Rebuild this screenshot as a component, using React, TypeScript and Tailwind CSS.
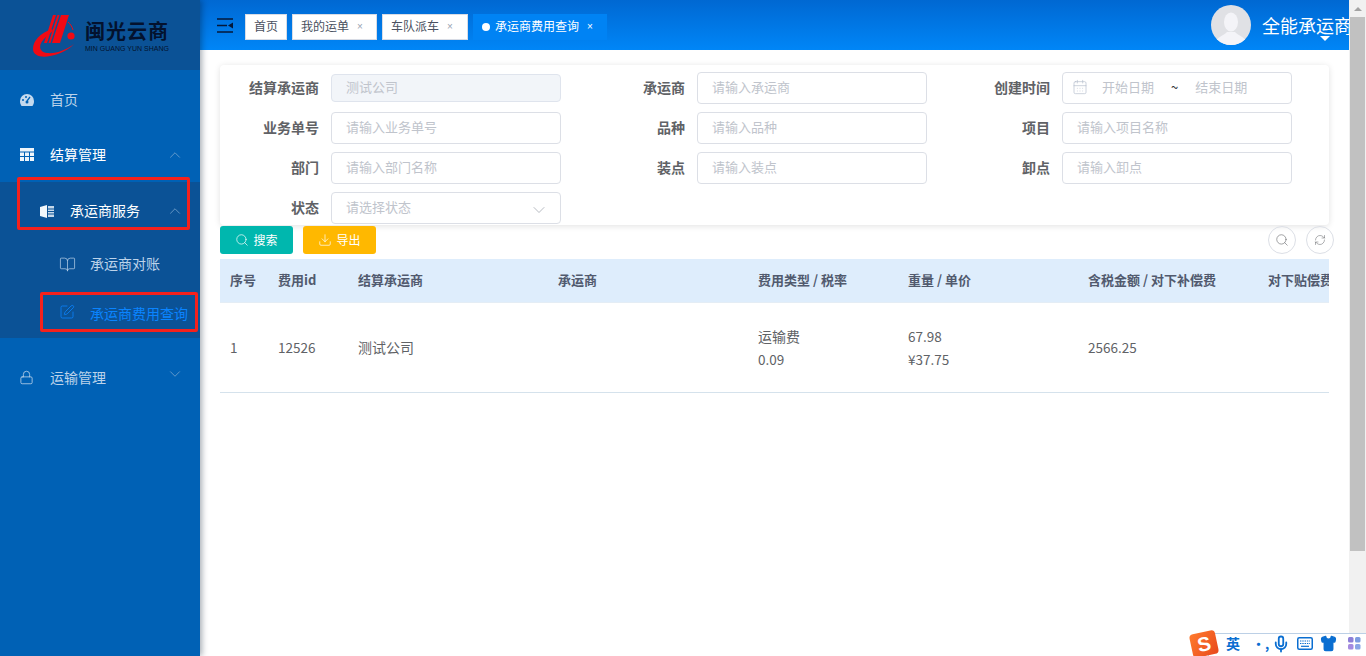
import { BookOpen, CalendarDays, ChevronDown, ChevronUp, Download, Lock, Mic, RefreshCw, Search, Shirt, SquarePen } from 'lucide-react'

const fontStack = 'font-["Noto_Sans_CJK_SC","Liberation_Sans",sans-serif]'

const formRows = [
  [
    { label: '结算承运商', placeholder: '测试公司', disabled: true },
    { label: '承运商', placeholder: '请输入承运商' },
    { label: '创建时间', range: true },
  ],
  [
    { label: '业务单号', placeholder: '请输入业务单号' },
    { label: '品种', placeholder: '请输入品种' },
    { label: '项目', placeholder: '请输入项目名称' },
  ],
  [
    { label: '部门', placeholder: '请输入部门名称' },
    { label: '装点', placeholder: '请输入装点' },
    { label: '卸点', placeholder: '请输入卸点' },
  ],
]

const columns = [
  { title: '序号', w: 'w-[48px]' },
  { title: '费用id', w: 'w-[80px]' },
  { title: '结算承运商', w: 'w-[200px]' },
  { title: '承运商', w: 'w-[200px]' },
  { title: '费用类型 / 税率', w: 'w-[150px]' },
  { title: '重量 / 单价', w: 'w-[180px]' },
  { title: '含税金额 / 对下补偿费', w: 'w-[180px]' },
  { title: '对下贴偿费', w: 'w-[120px]' },
]

function Logo() {
  return (
    <div className="flex h-[70px] items-center bg-[#0b5296] pl-[32px]">
      <svg width="44" height="44" viewBox="0 0 44 44" className="shrink-0">
        <path d="M21 2 L24 2 L15 30 L12 30 Z M25.500 2 L27.500 2 L18.500 30 L16.500 30 Z M29 2 L37 2 L28 30 L20 30 Z" fill="#f00a14" />
        <path d="M20 16 C8 20 1 28 1 36 C1 43 10 45 18 43 C28 41 36 37 42 31 C34 37 24 41 15 40 C7 39 6 32 12 26 C15 23 18 20 21 18 Z" fill="#f00a14" />
        <path d="M36 9 C38 11 40 13 41 17" stroke="#f00a14" strokeWidth="1" fill="none" />
        <circle cx="39" cy="23" r="3.600" fill="#f00a14" />
      </svg>
      <div className="ml-[9px] flex flex-col">
        <span className="text-[20px] leading-[26px] font-bold tracking-[1px] whitespace-nowrap text-[#03122e]">闽光云商</span>
        <span className='font-["Liberation_Sans",sans-serif] text-[7px] leading-[9px] whitespace-nowrap text-[#03122e]'>MIN GUANG YUN SHANG</span>
      </div>
    </div>
  )
}

function Sidebar() {
  return (
    <aside className="relative z-10 flex h-full w-[200px] shrink-0 flex-col bg-[#0061b5] shadow-[2px_0_6px_rgba(0,21,41,0.35)]">
      <Logo />

      <div className="flex h-[60px] items-center pl-[20px] text-[14px] text-[#bcd3ea]">
        <svg width="14" height="12" viewBox="0 0 14 12" className="shrink-0">
          <path d="M7 0 A7 7 0 0 0 0 7 C0 9 .5 10.500 1.500 12 L12.500 12 C13.500 10.500 14 9 14 7 A7 7 0 0 0 7 0 Z" fill="#c4d9ee" />
          <path d="M7 7 L10 3" stroke="#0061b5" strokeWidth="1.300" />
          <circle cx="3" cy="6" r="1" fill="#0061b5" />
          <circle cx="6" cy="3" r="1" fill="#0061b5" />
          <circle cx="7" cy="8" r="1.500" fill="#0061b5" />
        </svg>
        <span className="mb-[2px] ml-[16px]">首页</span>
      </div>

      <div className="flex h-[52px] items-center pr-[16px] pb-[3px] pl-[20px] text-[14px] text-white">
        <svg width="14" height="13" viewBox="0 0 14 13" className="shrink-0">
          <path d="M0 0 H14 V13 H0 Z" fill="#eef5fb" />
          <path d="M0 4 H14 M4.500 4 V13 M9.500 4 V13 M0 8.500 H14" stroke="#0061b5" strokeWidth="1" />
        </svg>
        <span className="ml-[16px]">结算管理</span>
        <ChevronUp size={18} strokeWidth={1} className="ml-auto text-[#7fa9d2]" />
      </div>

      <div className="flex h-[156px] flex-col bg-[#0b5296]">
        <div className="flex h-[58px] items-center pr-[16px] pl-[40px] text-[14px] text-white">
          <svg width="14" height="13" viewBox="0 0 14 13" className="shrink-0">
            <path d="M0 2 L7 0 V13 L0 11 Z" fill="#f2f7fb" />
            <path d="M8 1 H14 V12 H8 Z" fill="#c6d8ea" />
            <path d="M8 4 H14 M8 6.500 H14 M8 9 H14" stroke="#0b5296" strokeWidth="1" />
          </svg>
          <span className="mb-[2px] ml-[16px]">承运商服务</span>
          <ChevronUp size={18} strokeWidth={1} className="ml-auto text-[#7fa9d2]" />
        </div>
        <div className="flex h-[49px] items-center pl-[59px] text-[14px] text-[#bcd3ea]">
          <BookOpen size={17} strokeWidth={1} className="shrink-0" />
          <span className="mb-[2px] ml-[14px]">承运商对账</span>
        </div>
        <div className="flex h-[49px] items-center pl-[59px] text-[14px] text-[#0a84ff]">
          <SquarePen size={16} strokeWidth={1.200} className="mb-[4px] shrink-0" />
          <span className="ml-[15px] whitespace-nowrap">承运商费用查询</span>
        </div>
      </div>

      <div className="mt-[12px] flex h-[54px] items-center pr-[16px] pl-[19px] text-[14px] text-[#bcd3ea]">
        <Lock size={15} strokeWidth={1.300} className="shrink-0" />
        <span className="ml-[16px]">运输管理</span>
        <ChevronDown size={18} strokeWidth={1} className="mb-[6px] ml-auto text-[#7fa9d2]" />
      </div>

      {/* red marks drawn over the menu */}
      <div className="absolute top-[177px] left-[17px] h-[53px] w-[173px] rounded-[2px] border-[3px] border-[#f5211c]" />
      <div className="absolute top-[292px] left-[40px] h-[40px] w-[158px] rounded-[2px] border-[3px] border-[#f5211c]" />
    </aside>
  )
}

function Tab({ label, w, close }: { label: string; w: string; close?: boolean }) {
  return (
    <div className={`flex h-[26px] ${w} items-center border border-[#d8dce5] bg-white pb-[2px] pl-[8px] text-[12px] whitespace-nowrap text-[#495060]`}>
      <span>{label}</span>
      {close && <span className='ml-[8px] font-["Liberation_Sans",sans-serif] text-[10px] text-[#9aa3b2]'>×</span>}
    </div>
  )
}

function ActiveTab({ label }: { label: string }) {
  return (
    <div className="flex h-[26px] w-[134px] items-center bg-[#0083f4] pl-[9px] text-[12px] whitespace-nowrap text-white">
      <span className="h-[8px] w-[8px] rounded-full bg-white" />
      <span className="mb-[2px] ml-[5px]">{label}</span>
      <span className='mb-[2px] ml-[8px] font-["Liberation_Sans",sans-serif] text-[10px]'>×</span>
    </div>
  )
}

function Header() {
  return (
    <header className="flex h-[50px] shrink-0 items-center overflow-hidden bg-gradient-to-b from-[#0068d2] to-[#0086f7] pl-[17px]">
      <svg width="16" height="15" viewBox="0 0 16 15" className="shrink-0">
        <path d="M0 1 H16 M0 7.500 H10 M0 14 H16" stroke="#04183a" strokeWidth="1.600" />
        <path d="M16 4.500 V10.500 L11 7.500 Z" fill="#04183a" />
      </svg>
      <div className="mt-[4px] ml-[12px] flex gap-[5px]">
        <Tab label="首页" w="w-[42px]" />
        <Tab label="我的运单" w="w-[85px]" close />
        <Tab label="车队派车" w="w-[86px]" close />
        <ActiveTab label="承运商费用查询" />
      </div>
      <div className="relative ml-[604px] flex shrink-0 items-center">
        <svg width="40" height="40" viewBox="0 0 40 40" className="shrink-0">
          <clipPath id="avatar"><circle cx="20" cy="20" r="20" /></clipPath>
          <g clipPath="url(#avatar)">
            <rect width="40" height="40" fill="#e0e1e5" />
            <ellipse cx="20" cy="17" rx="7" ry="9.500" fill="#f4f4f8" />
            <path d="M4 40 C5 31 13 31 16 27 H24 C27 31 35 31 36 40 Z" fill="#f4f4f8" />
          </g>
        </svg>
        <span className="ml-[11px] text-[18px] whitespace-nowrap text-white">全能承运商</span>
        <span className="absolute top-[31px] left-[109px] h-0 w-0 border-x-[5px] border-t-[5px] border-x-transparent border-t-white" />
      </div>
    </header>
  )
}

function Field({ placeholder, disabled, select }: { placeholder?: string; disabled?: boolean; select?: boolean }) {
  return (
    <div className={`flex w-[230px] shrink-0 items-center rounded-[4px] border pl-[15px] text-[13px] text-[#c0c4cc] ${disabled ? 'h-[28px] border-[#dfe4ed] bg-[#f2f5f9]' : 'h-[32px] border-[#dcdfe6] bg-white'}`}>
      <span className="mb-[2px] -ml-px">{placeholder}</span>
      {select && <ChevronDown size={20} strokeWidth={1} className="mt-[4px] mr-[11px] ml-auto text-[#a8adb6]" />}
    </div>
  )
}

function RangeField() {
  return (
    <div className="flex h-[32px] w-[230px] shrink-0 items-center rounded-[4px] border border-[#dcdfe6] bg-white pl-[9px] text-[13px] text-[#c0c4cc]">
      <CalendarDays size={16} strokeWidth={1} className="mb-[3px] shrink-0 text-[#b4bccc]" />
      <span className="mb-[2px] ml-[14px]">开始日期</span>
      <span className="mb-[2px] ml-[17px] text-[#303133]">~</span>
      <span className="mb-[2px] ml-[17px]">结束日期</span>
    </div>
  )
}

function FormItem({ label, w, children }: { label: string; w: string; children: React.ReactNode }) {
  return (
    <div className="flex items-center">
      <span className={`${w} mb-[2px] shrink-0 pr-[12px] text-right text-[14px] font-bold whitespace-nowrap text-[#606266]`}>{label}</span>
      {children}
    </div>
  )
}

const labelWidths = ['w-[111px]', 'w-[136px]', 'w-[135px]']

function SearchForm() {
  return (
    <div className="h-[160px] w-[1109px] rounded-[4px] bg-white pt-[7px] shadow-[0_1px_6px_rgba(0,0,0,0.12)]">
      <div className="flex flex-col gap-[8px]">
        {formRows.map((row, i) => (
          <div key={i} className="flex">
            {row.map((f, j) => (
              <FormItem key={f.label} label={f.label} w={labelWidths[j]}>
                {f.range ? <RangeField /> : <Field placeholder={f.placeholder} disabled={f.disabled} />}
              </FormItem>
            ))}
          </div>
        ))}
        <div className="flex">
          <FormItem label="状态" w="w-[111px]">
            <Field placeholder="请选择状态" select />
          </FormItem>
        </div>
      </div>
    </div>
  )
}

function Toolbar() {
  return (
    <div className="flex h-[29px] w-[1114px] items-center pt-px">
      <button className="flex h-[28px] w-[73px] items-center justify-center gap-[4px] rounded-[3px] bg-[#00b7ae] text-[12px] text-white">
        <Search size={14} strokeWidth={1.200} />
        搜索
      </button>
      <button className="ml-[10px] flex h-[28px] w-[73px] items-center justify-center gap-[4px] rounded-[3px] bg-[#ffb800] text-[12px] text-white">
        <Download size={14} strokeWidth={1.200} />
        导出
      </button>
      <button className="ml-auto flex h-[28px] w-[28px] items-center justify-center rounded-full border border-[#dcdfe6] text-[#606266]">
        <Search size={14} strokeWidth={1} />
      </button>
      <button className="ml-[10px] flex h-[28px] w-[28px] items-center justify-center rounded-full border border-[#dcdfe6] text-[#606266]">
        <RefreshCw size={12} strokeWidth={1} />
      </button>
    </div>
  )
}

function FeeTable() {
  return (
    <div className="mt-[5px] w-[1109px] overflow-hidden">
      <div className="flex h-[44px] w-max items-center border-b border-[#e4edf5] bg-[#deedfc] pb-[2px] text-[13px] font-bold text-[#515a6e]">
        {columns.map((c) => (
          <div key={c.title} className={`${c.w} shrink-0 pl-[10px] whitespace-nowrap`}>{c.title}</div>
        ))}
      </div>
      <div className="flex h-[90px] w-max items-center border-b border-[#d5e2ec] text-[14px] text-[#606266]">
        <div className="w-[48px] shrink-0 pl-[10px] text-[13.5px]">1</div>
        <div className="w-[80px] shrink-0 pl-[10px] text-[13.5px]">12526</div>
        <div className="w-[200px] shrink-0 pl-[10px]">测试公司</div>
        <div className="w-[200px] shrink-0 pl-[10px]" />
        <div className="w-[150px] shrink-0 pl-[10px] leading-[23px]">
          <div>运输费</div>
          <div className="text-[13.5px]">0.09</div>
        </div>
        <div className="w-[180px] shrink-0 pl-[10px] text-[13.5px] leading-[23px]">
          <div>67.98</div>
          <div>¥37.75</div>
        </div>
        <div className="w-[180px] shrink-0 pl-[10px] text-[13.5px]">2566.25</div>
        <div className="w-[120px] shrink-0 pl-[10px]" />
      </div>
    </div>
  )
}

function Scrollbar() {
  return (
    <div className="flex h-full w-[17px] shrink-0 flex-col items-center bg-[#f1f1f1]">
      <div className="flex h-[17px] w-full items-center justify-center">
        <span className="h-0 w-0 border-x-[4px] border-b-[4px] border-x-transparent border-b-[#a3a3a3]" />
      </div>
      <div className="h-[534px] w-[15px] bg-[#c1c1c1]" />
    </div>
  )
}

function ImeBar() {
  return (
    <div className="absolute right-0 bottom-0 z-20 flex h-[25px] w-[178px] items-center">
      <div className="absolute top-[2px] right-0 left-[20px] h-[23px] border-t border-l border-[#bcd0e6] bg-white" />
      <div className="relative flex h-[25px] w-[32px] items-center justify-center">
        <div className="flex h-[24px] w-[26px] -rotate-12 items-center justify-center rounded-[4px] bg-gradient-to-br from-[#ff7a2e] to-[#e8481c] font-['Liberation_Sans',sans-serif] text-[20px] leading-none font-bold text-white">S</div>
      </div>
      <div className="relative flex flex-1 items-center pl-[6px] text-[#0a6ed1]">
        <span className="text-[14px] font-bold">英</span>
        <span className="ml-[12px] w-[14px] text-[13px] leading-none font-bold">•,</span>
        <Mic size={18} className="ml-[6px]" strokeWidth={2.400} />
        <svg width="16" height="13" viewBox="0 0 16 13" className="ml-[7px] shrink-0">
          <rect x="0.750" y="0.750" width="14.500" height="11.500" rx="1.500" fill="none" stroke="#0a6ed1" strokeWidth="1.500" />
          <path d="M3 4 H13 M3 6.500 H13" stroke="#0a6ed1" strokeWidth="1.200" strokeDasharray="1.400 0.900" />
          <path d="M4 9.300 H12" stroke="#0a6ed1" strokeWidth="1.200" />
        </svg>
        <Shirt size={17} fill="#0a6ed1" className="ml-[7px]" />
        <svg width="13" height="13" viewBox="0 0 13 13" className="ml-[11px] shrink-0">
          <rect x="0" y="0" width="5.500" height="5.500" rx="1.500" fill="#8d7fd8" />
          <rect x="7" y="0" width="5.500" height="5.500" rx="1.500" fill="#7d9be0" />
          <rect x="0" y="7" width="5.500" height="5.500" rx="1.500" fill="#a58be0" />
          <rect x="7" y="7" width="5.500" height="5.500" rx="1.500" fill="#8aa5e6" />
        </svg>
      </div>
    </div>
  )
}

export default function App() {
  return (
    <div className={`relative flex h-[656px] w-[1366px] overflow-hidden bg-white ${fontStack}`}>
      <Sidebar />
      <main className="flex h-full min-w-0 flex-1 flex-col overflow-hidden">
        <Header />
        <div className="pt-[15px] pl-[20px]">
          <SearchForm />
          <Toolbar />
          <FeeTable />
        </div>
      </main>
      <Scrollbar />
      <ImeBar />
    </div>
  )
}
